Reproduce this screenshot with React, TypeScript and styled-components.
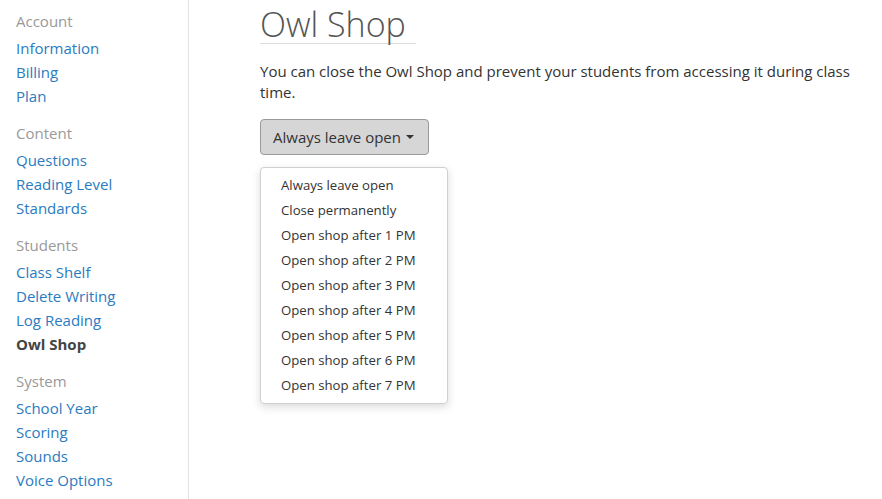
import { createGlobalStyle } from 'styled-components';
import styled from 'styled-components';

const GlobalStyle = createGlobalStyle`
  body {
    margin: 0;
    background: #fff;
    font-family: 'Open Sans', Lato, sans-serif;
    color: #333;
  }
`;

const sections = [
  { title: 'Account', links: ['Information', 'Billing', 'Plan'] },
  { title: 'Content', links: ['Questions', 'Reading Level', 'Standards'] },
  { title: 'Students', links: ['Class Shelf', 'Delete Writing', 'Log Reading', 'Owl Shop'] },
  { title: 'System', links: ['School Year', 'Scoring', 'Sounds', 'Voice Options'] },
];

const options = [
  'Always leave open',
  'Close permanently',
  'Open shop after 1 PM',
  'Open shop after 2 PM',
  'Open shop after 3 PM',
  'Open shop after 4 PM',
  'Open shop after 5 PM',
  'Open shop after 6 PM',
  'Open shop after 7 PM',
];

const App = () => {
  return (
    <>
      <GlobalStyle />
      <Page>
        <Sidebar>
          {sections.map((section) => (
            <Section key={section.title}>
              <SectionTitle>{section.title}</SectionTitle>
              {section.links.map((link) => (
                <NavLink key={link} active={link === 'Owl Shop'}>
                  {link}
                </NavLink>
              ))}
            </Section>
          ))}
        </Sidebar>
        <Main>
          <Title>Owl Shop</Title>
          <Description>
            You can close the Owl Shop and prevent your students from accessing it during class
            time.
          </Description>
          <DropdownWrapper>
            <DropdownButton>
              Always leave open
              <Caret />
            </DropdownButton>
            <Menu>
              {options.map((option) => (
                <MenuItem key={option}>{option}</MenuItem>
              ))}
            </Menu>
          </DropdownWrapper>
        </Main>
      </Page>
    </>
  );
};

const Page = styled.div`
  display: flex;
  min-height: 499px;
`;

const Sidebar = styled.nav`
  width: 189px;
  flex-shrink: 0;
  border-right: 1px solid #e3e3e3;
  padding: 9px 0 0 16px;
  box-sizing: border-box;
  display: flex;
  flex-direction: column;
  gap: 13px;
`;

const Section = styled.div`
  display: flex;
  flex-direction: column;
`;

const SectionTitle = styled.div`
  font-size: 15px;
  line-height: 24px;
  color: #999;
  margin-bottom: 3px;
`;

const NavLink = styled.a<{ active?: boolean }>`
  font-size: 15px;
  line-height: 24px;
  color: ${({ active }) => (active ? '#444' : '#2a7bc1')};
  font-weight: ${({ active }) => (active ? 700 : 400)};
  text-decoration: none;
  cursor: pointer;
`;

const Main = styled.main`
  flex: 1;
  padding: 6px 16px 0 71px;
  display: flex;
  flex-direction: column;
  align-items: flex-start;
`;

const Title = styled.h1`
  margin: 0;
  font-size: 34px;
  font-weight: 300;
  line-height: 37px;
  color: #555;
  padding-right: 10px;
  border-bottom: 1px solid #ddd;
`;

const Description = styled.p`
  margin: 17px 0 0;
  font-size: 15px;
  line-height: 21px;
  color: #333;
`;

const DropdownWrapper = styled.div`
  position: relative;
  margin-top: 16px;
`;

const DropdownButton = styled.button`
  display: flex;
  align-items: center;
  height: 36px;
  padding: 0 14px 0 12px;
  background: #d6d6d6;
  border: 1px solid #9a9a9a;
  border-radius: 4px;
  font-family: inherit;
  font-size: 15px;
  color: #333;
  cursor: pointer;
`;

const Caret = styled.span`
  margin-left: 5px;
  width: 0;
  height: 0;
  border-left: 4px solid transparent;
  border-right: 4px solid transparent;
  border-top: 4px solid #333;
`;

const Menu = styled.ul`
  position: absolute;
  top: 48px;
  left: 0;
  width: 188px;
  box-sizing: border-box;
  margin: 0;
  padding: 5px 0;
  list-style: none;
  background: #fff;
  border: 1px solid #d0d0d0;
  border-radius: 4px;
  box-shadow: 0 3px 8px rgba(0, 0, 0, 0.15);
`;

const MenuItem = styled.li`
  padding: 0 20px;
  font-size: 13.2px;
  line-height: 25px;
  color: #333;
  white-space: nowrap;
  cursor: pointer;
`;

export default App;
